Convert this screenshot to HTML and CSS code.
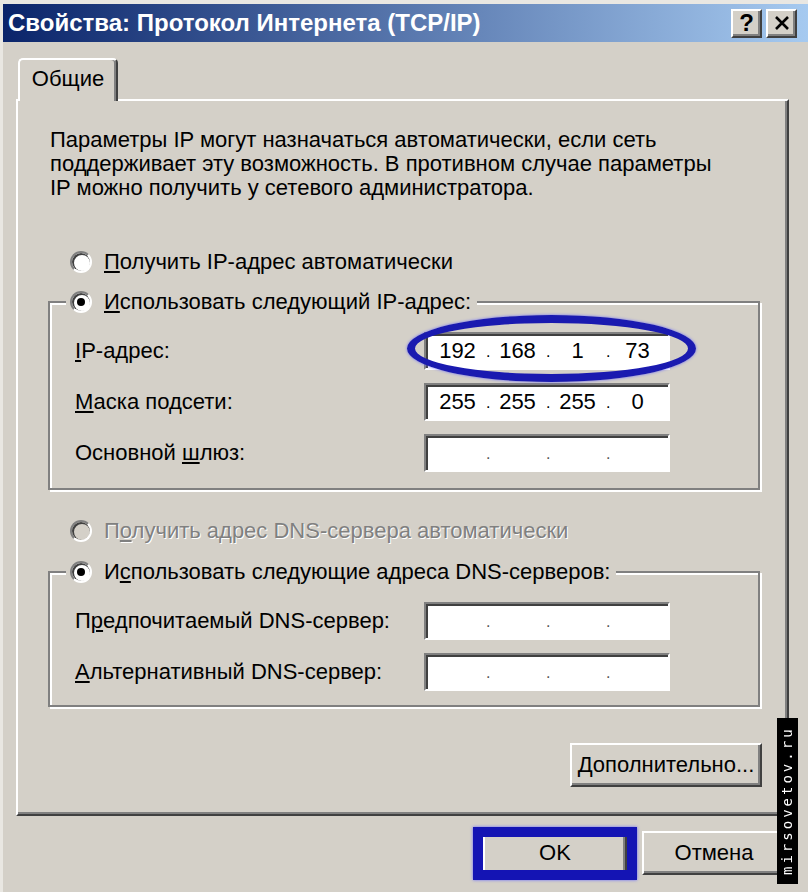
FILE: index.html
```html
<!DOCTYPE html>
<html lang="ru">
<head>
    <meta charset="UTF-8">
    <title>Свойства: Протокол Интернета (TCP/IP)</title>
    <link rel="stylesheet" href="styles.css">
</head>
<body>
    <div class="window">
        <div class="titlebar">
            <span class="title">Свойства: Протокол Интернета (TCP/IP)</span>
            <div class="caption-btns">
                <span class="cap-btn help">?</span>
                <span class="cap-btn">
                    <svg width="16" height="14" viewBox="0 0 16 14"><path d="M2 1 L14 13 M14 1 L2 13" stroke="#000" stroke-width="2.6" fill="none"/></svg>
                </span>
            </div>
        </div>

        <div class="client">
            <div class="tabs">
                <div class="tab">Общие</div>
            </div>

            <div class="panel">
                <p class="intro">Параметры IP могут назначаться автоматически, если сеть<br>поддерживает эту возможность. В противном случае параметры<br>IP можно получить у сетевого администратора.</p>

                <div class="option first">
                    <span class="radio"></span>
                    <span><u>П</u>олучить IP-адрес автоматически</span>
                </div>

                <fieldset class="group ip-group">
                    <legend class="option">
                        <span class="radio checked"></span>
                        <span><u>И</u>спользовать следующий IP-адрес:</span>
                    </legend>
                    <div class="fields">
                        <label><u>I</u>P-адрес:</label>
                        <div class="ip-box marked">
                            <span class="seg">192</span><span class="dot">.</span><span class="seg">168</span><span class="dot">.</span><span class="seg">1</span><span class="dot">.</span><span class="seg">73</span>
                        </div>

                        <label><u>М</u>аска подсети:</label>
                        <div class="ip-box">
                            <span class="seg">255</span><span class="dot">.</span><span class="seg">255</span><span class="dot">.</span><span class="seg">255</span><span class="dot">.</span><span class="seg">0</span>
                        </div>

                        <label>Основной <u>ш</u>люз:</label>
                        <div class="ip-box empty">
                            <span class="seg"></span><span class="dot">.</span><span class="seg"></span><span class="dot">.</span><span class="seg"></span><span class="dot">.</span><span class="seg"></span>
                        </div>
                    </div>
                </fieldset>

                <div class="option dns-auto disabled">
                    <span class="radio"></span>
                    <span>П<u>о</u>лучить адрес DNS-сервера автоматически</span>
                </div>

                <fieldset class="group dns-group">
                    <legend class="option">
                        <span class="radio checked"></span>
                        <span>И<u>с</u>пользовать следующие адреса DNS-серверов:</span>
                    </legend>
                    <div class="fields">
                        <label>П<u>р</u>едпочитаемый DNS-сервер:</label>
                        <div class="ip-box empty">
                            <span class="seg"></span><span class="dot">.</span><span class="seg"></span><span class="dot">.</span><span class="seg"></span><span class="dot">.</span><span class="seg"></span>
                        </div>

                        <label><u>А</u>льтернативный DNS-сервер:</label>
                        <div class="ip-box empty">
                            <span class="seg"></span><span class="dot">.</span><span class="seg"></span><span class="dot">.</span><span class="seg"></span><span class="dot">.</span><span class="seg"></span>
                        </div>
                    </div>
                </fieldset>

                <div class="panel-actions">
                    <button class="btn adv"><u>Д</u>ополнительно...</button>
                </div>
            </div>

            <div class="footer">
                <span class="focus-mark"><button class="btn dlg">OK</button></span>
                <button class="btn dlg">Отмена</button>
            </div>
        </div>

        <div class="watermark">mirsovetov.ru</div>
    </div>
</body>
</html>
```

FILE: styles.css
```css
body{
    margin: 0;
    background-color: #d4d0c8;
    font-family: "Liberation Sans", Arial, sans-serif;
    font-size: 22px;
    color: #000;
}
.window{
    position: relative;
    width: 808px;
    height: 892px;
    box-sizing: border-box;
    border-top: 4px solid #e9e7e2;
    border-left: 3px solid #e9e7e2;
    overflow: hidden;
}

/* title bar */
.titlebar{
    height: 38px;
    display: flex;
    align-items: center;
    justify-content: space-between;
    padding: 0 11px 0 5px;
    background: linear-gradient(90deg, #0a246a 0%, #a6caf0 100%);
}
.title{
    color: white;
    font-weight: bold;
    font-size: 24px;
    font-family: "Liberation Sans Narrow", "Liberation Sans", sans-serif;
}
.caption-btns{
    display: flex;
    gap: 4px;
}
.cap-btn{
    width: 31px;
    height: 29px;
    box-sizing: border-box;
    display: flex;
    align-items: center;
    justify-content: center;
    background-color: #d4d0c8;
    border: 2px solid;
    border-color: #fff #404040 #404040 #fff;
    box-shadow: inset -2px -2px #808080;
}
.help{
    font-weight: bold;
    font-size: 24px;
}

/* dialog client area */
.client{
    padding: 16px 19px 0 13px;
}
.tabs{
    display: flex;
    padding-left: 2px;
}
.tab{
    position: relative;
    z-index: 1;
    width: 100px;
    height: 43px;
    box-sizing: border-box;
    margin-bottom: -2px;
    padding-bottom: 3px;
    display: flex;
    align-items: center;
    justify-content: center;
    background-color: #d4d0c8;
    border: 2px solid;
    border-bottom: none;
    border-color: #fff #404040 #fff #fff;
    border-radius: 5px 5px 0 0;
    box-shadow: inset -2px 0 #808080;
}
.panel{
    height: 717px;
    box-sizing: border-box;
    padding: 27px 27px 0 30px;
    border: 2px solid;
    border-color: #fff #404040 #404040 #fff;
    box-shadow: inset -2px -2px #808080;
}
.intro{
    margin: 0 0 0 2px;
    line-height: 24px;
}

/* radio options */
.option{
    display: flex;
    align-items: center;
    gap: 12px;
    height: 30px;
    margin-left: 22px;
}
.option.first{
    margin-top: 47px;
}
.radio{
    position: relative;
    width: 22px;
    height: 22px;
    box-sizing: border-box;
    flex: none;
    border-radius: 50%;
    background-color: #fff;
    border: 2px solid;
    border-color: #808080 #fff #fff #808080;
    box-shadow: inset 1px 1px 0 1px #404040;
}
.radio.checked::after{
    content: "";
    position: absolute;
    left: 5px;
    top: 5px;
    width: 8px;
    height: 8px;
    border-radius: 50%;
    background-color: #000;
}
.disabled{
    color: #808080;
    text-shadow: 1px 1px 0 #fff;
}
.disabled .radio{
    background-color: #d4d0c8;
}
.dns-auto{
    margin-top: 26px;
}

/* group boxes */
.group{
    margin: 10px 0 0 0;
    padding: 15px 0 16px 16px;
    min-inline-size: 0;
    border: 2px solid #808080;
    box-shadow: inset 2px 2px #fff, 2px 2px #fff;
}
.group legend.option{
    margin-left: 0;
    padding: 0 6px 0 4px;
    background-color: #d4d0c8;
}
.dns-group{
    margin-top: 11px;
    padding-bottom: 14px;
}
.fields{
    display: grid;
    grid-template-columns: 349px 246px;
    row-gap: 13px;
    align-items: center;
    margin-left: 9px;
}

/* ip address boxes */
.ip-box{
    height: 38px;
    box-sizing: border-box;
    display: flex;
    align-items: center;
    padding-left: 3px;
    background-color: #fff;
    border: 2px solid;
    border-color: #808080 #fff #fff #808080;
    box-shadow: inset 2px 2px #404040;
}
.seg{
    width: 57px;
    text-align: center;
}
.dot{
    width: 3px;
    text-align: center;
    font-size: 16px;
    align-self: flex-end;
    margin-bottom: 7px;
}
.empty .dot{
    color: #555;
}
.marked{
    position: relative;
}
.marked::after{
    content: "";
    position: absolute;
    left: -19px;
    right: -28px;
    top: -19px;
    bottom: -14px;
    border: 8px solid #1a1ab0;
    border-radius: 50%;
    box-shadow: 0 0 3px #6a6aff;
}

/* buttons */
.btn{
    font: inherit;
    color: #000;
    padding: 0;
    background-color: #d4d0c8;
    border: 2px solid;
    border-color: #fff #404040 #404040 #fff;
    box-shadow: inset -2px -2px #808080;
}
.panel-actions{
    display: flex;
    justify-content: flex-end;
    margin: 36px -2px 0 0;
}
.adv{
    width: 192px;
    height: 44px;
}
.footer{
    display: flex;
    justify-content: flex-end;
    gap: 15px;
    margin-top: 15px;
    padding-right: 3px;
}
.dlg{
    width: 144px;
    height: 44px;
}
.focus-mark{
    position: relative;
    display: flex;
}
.focus-mark::after{
    content: "";
    position: absolute;
    left: -10px;
    right: -10px;
    top: -4px;
    bottom: -5px;
    border: 10px solid #1414b4;
    box-shadow: 0 0 3px #6a6aff;
}

/* watermark strip */
.watermark{
    position: absolute;
    left: 774px;
    top: 714px;
    width: 21px;
    height: 166px;
    background-color: #000;
    color: #fff;
    font-family: "DejaVu Sans Mono", monospace;
    font-size: 14px;
    letter-spacing: 3px;
    line-height: 21px;
    text-align: center;
    writing-mode: vertical-rl;
    transform: rotate(180deg);
}
```
